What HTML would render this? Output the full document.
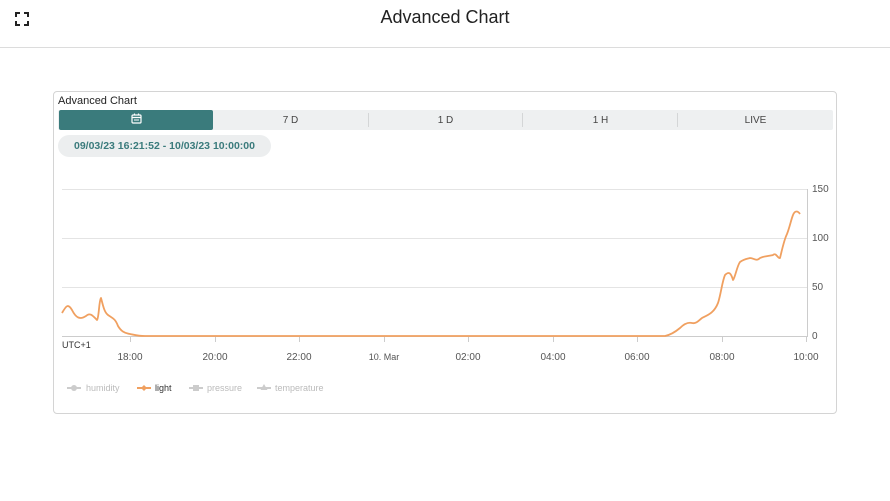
<!DOCTYPE html>
<html><head><meta charset="utf-8"><style>
body{margin:0;width:890px;height:501px;background:#fff;font-family:"Liberation Sans",sans-serif;position:relative;overflow:hidden}
.hdr{position:absolute;left:0;top:0;width:890px;height:47px;border-bottom:1px solid #dcdcdc}
.title{position:absolute;left:0;width:890px;top:7px;text-align:center;font-size:18px;color:#222}
.card{position:absolute;left:53px;top:91px;width:782px;height:321px;border:1px solid #d4d4d4;border-radius:4px}
.ct{position:absolute;left:4px;top:3px;font-size:11px;color:#222}
.tabs{position:absolute;left:4px;top:18px;width:775px;height:20px;background:#eef0f1;border-radius:2px}
.tab{position:absolute;top:0;height:20px;line-height:22px;text-align:center;font-size:10px;color:#444}
.act{background:#3a7b7c;border-radius:2px;line-height:20px}
.sep{position:absolute;top:3px;width:1px;height:14px;background:#d4d6d7}
.pill{position:absolute;left:4px;top:43px;width:213px;height:22px;background:#eceeef;border-radius:11px;text-align:center;line-height:22px;font-size:10.5px;font-weight:bold;color:#3a7b7c}
</style></head><body>
<div class="hdr">
<svg style="position:absolute;left:15px;top:12px" width="14" height="14" viewBox="0 0 14 14" fill="none" stroke="#222" stroke-width="2"><path d="M1 5V1h4M9 1h4v4M13 9v4H9M5 13H1V9"/></svg>
<div class="title">Advanced Chart</div></div>
<div class="card">
<div class="ct">Advanced Chart</div>
<div class="tabs">
<div class="tab act" style="left:1px;width:154px"><svg width="11" height="11" viewBox="0 0 11 11" style="vertical-align:middle;margin-top:-1px" fill="none" stroke="#fff" stroke-width="1.2"><rect x="1" y="2" width="9" height="8" rx="1"/><path d="M1 4.5h9M3.5 0.5v2M7.5 0.5v2"/><path d="M3 7h5" stroke-width="1"/></svg></div>
<div class="tab" style="left:155px;width:155px">7 D</div>
<div class="sep" style="left:310px"></div>
<div class="tab" style="left:310px;width:155px">1 D</div>
<div class="sep" style="left:464px"></div>
<div class="tab" style="left:465px;width:155px">1 H</div>
<div class="sep" style="left:619px"></div>
<div class="tab" style="left:620px;width:155px">LIVE</div>
</div>
<div class="pill">09/03/23 16:21:52 - 10/03/23 10:00:00</div>
</div>
<svg style="position:absolute;left:0;top:0" width="890" height="501" font-family="Liberation Sans, sans-serif">
<g stroke="#e4e4e4" stroke-width="1">
<path d="M62 189.5H808M62 238.5H808M62 287.5H808"/></g>
<path d="M62 336.5H808M807.5 189V337" stroke="#ccc"/>
<g stroke="#ccc"><path d="M130.5 337v5M215.5 337v5M299.5 337v5M384.5 337v5M468.5 337v5M553.5 337v5M637.5 337v5M722.5 337v5M806.5 337v5"/></g>
<g fill="#555" font-size="10"><text x="812" y="192">150</text><text x="812" y="241">100</text><text x="812" y="290">50</text><text x="812" y="339">0</text></g>
<g fill="#555" font-size="10" text-anchor="middle"><text x="130" y="360">18:00</text><text x="215" y="360">20:00</text><text x="299" y="360">22:00</text><text x="384" y="360" font-size="9">10. Mar</text><text x="468" y="360">02:00</text><text x="553" y="360">04:00</text><text x="637" y="360">06:00</text><text x="722" y="360">08:00</text><text x="806" y="360">10:00</text></g>
<text x="62" y="348" font-size="9" fill="#333">UTC+1</text>
<path fill="none" stroke="#f0a060" stroke-width="1.8" stroke-linejoin="round" d="M62 313C66 306 68 303 72 310C76 318 80 320 86 316C90 312 93 316 97 320C99 318 99 300 101 298C103 305 104 312 108 315C112 318 115 318 118 326C121 331 124 333 130 334C135 335 138 336 145 336L665 336C670 335 674 333 680 328C684 324 688 322 692 323C696 324 698 321 702 318C708 315 714 313 718 303C721 294 722 282 725 275C729 271 731 273 733 280C735 278 737 266 740 262C744 259 746 259 750 258C754 258 756 262 760 258C764 256 770 256 773 255C776 252 778 259 780 258C782 250 784 240 787 234C790 226 791 220 793 215C795 210 798 211 800 214"/>
<g font-size="9" fill="#bbb">
<path d="M67 388H81" stroke="#ccc" stroke-width="2"/><circle cx="74" cy="388" r="3" fill="#ccc"/><text x="86" y="391">humidity</text>
<path d="M137 388H151" stroke="#f0a060" stroke-width="2"/><path d="M144 385l3 3-3 3-3-3z" fill="#f0a060"/><text x="155" y="391" fill="#333">light</text>
<path d="M189 388H203" stroke="#ccc" stroke-width="2"/><rect x="193" y="385" width="6" height="6" fill="#ccc"/><text x="207" y="391">pressure</text>
<path d="M257 388H271" stroke="#ccc" stroke-width="2"/><path d="M264 384l3.5 6h-7z" fill="#ccc"/><text x="275" y="391">temperature</text>
</g>
</svg>
</body></html>
